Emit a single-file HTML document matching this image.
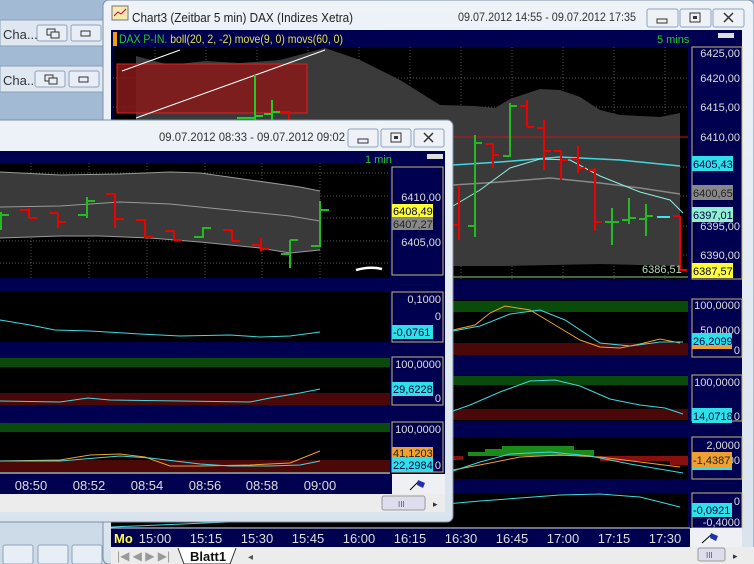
<!DOCTYPE html>
<html><head><meta charset="utf-8"><style>
body{margin:0;width:754px;height:564px;overflow:hidden;background:#a3bad4;font-family:"Liberation Sans",sans-serif}
svg{display:block}
text{font-family:"Liberation Sans",sans-serif}
</style></head><body>
<svg width="754" height="564" viewBox="0 0 754 564">
<defs>
<linearGradient id="tb" x1="0" y1="0" x2="0" y2="1"><stop offset="0" stop-color="#eef3f8"/><stop offset="1" stop-color="#d9e3ee"/></linearGradient>
</defs>
<rect x="0" y="0" width="754" height="564" fill="#a3bad4"/>
<g>
<rect x="0" y="20" width="104" height="26" fill="#dfe7f0" stroke="#8aa0b8"/>
<text x="3" y="39" font-size="13" fill="#333">Cha...</text>
<rect x="37" y="25" width="30" height="16" rx="2" fill="#e8eef5" stroke="#8da2bb"/>
<rect x="47" y="29" width="8" height="6" fill="none" stroke="#333"/><rect x="51" y="32" width="8" height="6" fill="#e8eef5" stroke="#333"/>
<rect x="71" y="25" width="30" height="16" rx="2" fill="#e8eef5" stroke="#8da2bb"/>
<rect x="81" y="31" width="9" height="5" fill="none" stroke="#333"/>
<rect x="0" y="66" width="104" height="26" fill="#dfe7f0" stroke="#8aa0b8"/>
<text x="3" y="85" font-size="13" fill="#333">Cha...</text>
<rect x="35" y="71" width="30" height="16" rx="2" fill="#e8eef5" stroke="#8da2bb"/>
<rect x="45" y="75" width="8" height="6" fill="none" stroke="#333"/><rect x="49" y="78" width="8" height="6" fill="#e8eef5" stroke="#333"/>
<rect x="69" y="71" width="30" height="16" rx="2" fill="#e8eef5" stroke="#8da2bb"/>
<rect x="79" y="77" width="9" height="5" fill="none" stroke="#333"/>
</g>
<rect x="0" y="512" width="104" height="52" fill="#cddbe9"/>
<rect x="3" y="545" width="30" height="19" rx="2" fill="#e8eef5" stroke="#8da2bb"/>
<rect x="38" y="545" width="30" height="19" rx="2" fill="#e8eef5" stroke="#8da2bb"/>
<rect x="72" y="545" width="30" height="19" rx="2" fill="#e8eef5" stroke="#8da2bb"/>

<!-- BACK WINDOW -->
<rect x="103" y="0" width="651" height="564" rx="6" fill="url(#tb)" stroke="#7d8fa5"/>
<rect x="112" y="6" width="16" height="14" fill="#f4e9b0" stroke="#777"/><path d="M114 16l4-4 3 2 5-5" stroke="#c03" fill="none"/>
<text x="132" y="22" font-size="13" fill="#222" textLength="221" lengthAdjust="spacingAndGlyphs">Chart3 (Zeitbar 5 min)  DAX (Indizes Xetra)</text>
<text x="458" y="21" font-size="12" fill="#333" textLength="178" lengthAdjust="spacingAndGlyphs">09.07.2012 14:55 - 09.07.2012 17:35</text>
<rect x="647" y="9" width="31" height="18" rx="2" fill="#eef2f7" stroke="#8da2bb"/><rect x="657" y="19" width="10" height="4" fill="none" stroke="#333"/>
<rect x="680" y="9" width="31" height="18" rx="2" fill="#eef2f7" stroke="#8da2bb"/><rect x="690" y="13" width="10" height="9" fill="none" stroke="#333"/><rect x="693" y="16" width="4" height="3" fill="#333"/>
<rect x="713" y="9" width="31" height="18" rx="2" fill="#eef2f7" stroke="#8da2bb"/><path d="M724 13l9 9M733 13l-9 9" stroke="#333" stroke-width="1.5"/>
<rect x="111" y="30" width="631" height="518" fill="#000050"/>
<rect x="113" y="32" width="4" height="14" fill="#f0a000"/>
<text x="119" y="43" font-size="12" textLength="224" lengthAdjust="spacingAndGlyphs"><tspan fill="#22cc22">DAX P-IN.</tspan><tspan fill="#e0e040"> boll(20, 2, -2) move(9, 0) movs(60, 0)</tspan></text>
<text x="657" y="43" font-size="11" fill="#22cc22">5 mins</text>
<rect x="718" y="33" width="16" height="5" fill="#ddd"/>
<rect x="113" y="47" width="575" height="232" fill="#000"/>
<g stroke="#555" stroke-dasharray="1,2">
<path d="M113 78H688M113 107H688M113 137H688M113 167H688M113 196H688M113 226H688M113 255H688"/>
<path d="M155 47V279M206 47V279M257 47V279M308 47V279M359 47V279M410 47V279M461 47V279M512 47V279M563 47V279M614 47V279M665 47V279"/>
</g>
<path d="M136 56L170 65L205 61L240 63L280 60L310 52L325 48L360 60L400 80L440 105L475 106L495 108L510 99L540 89L560 90L580 97L600 110L620 115L660 117L680 113L680 266L600 264L500 266L453 266L453 279L136 279Z" fill="#3a3a3a"/>
<rect x="117" y="64" width="190" height="49" fill="#8a1a1a" fill-opacity="0.85" stroke="#e02020"/>
<path d="M122 71L180 50M136 118L325 50" stroke="#fff" stroke-width="1"/>
<path d="M255 75V120M272 100V120M237 118H255M255 116H263M264 114H272M272 112H280" stroke="#22cc22" stroke-width="2" fill="none"/>
<path d="M280 112H289V120" stroke="#e00" stroke-width="2" fill="none"/>
<path d="M453 137H688" stroke="#c01818"/>
<path d="M453 185L500 182L550 178L600 183L640 188L680 194" stroke="#888" fill="none" stroke-width="1.5"/>
<path d="M453 165L500 162L560 157L620 160L680 166" stroke="#40d8e0" fill="none" stroke-width="1.5"/>
<path d="M453 206L480 190L510 168L540 159L570 160L600 176L640 192L670 200L683 213" stroke="#90f0e0" fill="none"/>
<path d="M453 277H688" stroke="#8c8" stroke-width="1"/>
<g stroke-width="2" fill="none">
<path d="M459 185V240M453 225H459" stroke="#e00"/>
<path d="M475 135V237M468 226H475M475 143H482" stroke="#22bb22"/>
<path d="M493 143V168M486 144H493M493 155H499" stroke="#e00"/>
<path d="M510 103V157M503 156H510M510 106H517" stroke="#22bb22"/>
<path d="M527 100V127M520 106H527M527 127H534" stroke="#e00"/>
<path d="M544 120V170M537 128H544M544 151H551" stroke="#e00"/>
<path d="M561 150V180M554 151H561M561 160H568" stroke="#e00"/>
<path d="M578 146V173M571 159H578M578 168H585" stroke="#e00"/>
<path d="M595 168V231M588 170H595M595 222H602" stroke="#e00"/>
<path d="M612 208V245M605 222H612M612 222H619" stroke="#22bb22"/>
<path d="M629 198V224M622 220H629M629 218H636" stroke="#22bb22"/>
<path d="M646 204V236M639 219H646M646 216H653" stroke="#22bb22"/>
<path d="M657 217H670" stroke="#40e0f0"/>
<path d="M680 216V270M673 216H680M680 270H687" stroke="#e00"/>
</g>
<text x="642" y="273" font-size="11" fill="#bdb">6386,51</text>
<rect x="692" y="47" width="50" height="232" fill="#000050" stroke="#c8b870"/>
<g font-size="11" fill="#ddd" text-anchor="end">
<text x="740" y="57">6425,00</text><text x="740" y="82">6420,00</text><text x="740" y="111">6415,00</text><text x="740" y="141">6410,00</text>
<text x="740" y="230">6395,00</text><text x="740" y="259">6390,00</text>
</g>
<rect x="692" y="156" width="41" height="15" fill="#30e0e8"/><text x="693" y="168" font-size="11" fill="#004">6405,43</text>
<rect x="692" y="185" width="41" height="15" fill="#888"/><text x="693" y="197" font-size="11" fill="#222">6400,65</text>
<rect x="692" y="207" width="41" height="15" fill="#90f0d0"/><text x="693" y="219" font-size="11" fill="#004">6397,01</text>
<rect x="692" y="263" width="41" height="15" fill="#ffff30"/><text x="693" y="275" font-size="11" fill="#004">6387,57</text>
<rect x="453" y="299" width="235" height="57" fill="#000"/>
<rect x="453" y="301" width="235" height="11" fill="#0a4a0a"/>
<rect x="453" y="343" width="235" height="12" fill="#4a0808"/>
<path d="M453 330L475 325L490 313L505 306L530 310L555 325L580 340L600 347L620 348L640 344L660 339L680 343" stroke="#f0a030" fill="none"/>
<path d="M453 331L480 326L510 314L540 310L565 320L600 343L630 346L660 342L683 342" stroke="#40d8e0" fill="none"/>
<rect x="692" y="299" width="50" height="58" fill="#000050" stroke="#c8b870"/>
<text x="740" y="309" font-size="11" fill="#ddd" text-anchor="end">100,0000</text>
<text x="740" y="334" font-size="11" fill="#ddd" text-anchor="end">50,0000</text>
<rect x="692" y="333" width="40" height="15" fill="#30e0e8"/><text x="693" y="345" font-size="11" fill="#004">26,2099</text>
<rect x="692" y="346" width="40" height="3" fill="#f0a030"/>
<text x="740" y="354" font-size="11" fill="#ddd" text-anchor="end">0</text>
<rect x="453" y="375" width="235" height="46" fill="#000"/>
<rect x="453" y="376" width="235" height="9" fill="#0a4a0a"/>
<rect x="453" y="409" width="235" height="11" fill="#4a0808"/>
<path d="M453 411L470 405L500 392L530 381L555 380L580 386L610 399L640 405L665 408L683 414" stroke="#40d8e0" fill="none"/>
<rect x="692" y="375" width="50" height="46" fill="#000050" stroke="#c8b870"/>
<text x="740" y="386" font-size="11" fill="#ddd" text-anchor="end">100,0000</text>
<rect x="692" y="408" width="40" height="15" fill="#30e0e8"/><text x="693" y="420" font-size="11" fill="#004">14,0718</text>
<text x="740" y="420" font-size="11" fill="#ddd" text-anchor="end">0</text>
<rect x="453" y="437" width="235" height="42" fill="#000"/>
<rect x="453" y="456" width="10" height="4" fill="#8a1010"/>
<rect x="468" y="452" width="36" height="4" fill="#1a8a1a"/><rect x="485" y="449" width="17" height="7" fill="#1a8a1a"/>
<rect x="502" y="446" width="72" height="10" fill="#1a8a1a"/><rect x="574" y="450" width="20" height="6" fill="#1a8a1a"/>
<rect x="600" y="456" width="88" height="5" fill="#8a1010"/><rect x="670" y="456" width="18" height="9" fill="#8a1010"/>
<path d="M453 470L490 463L520 457L560 455L600 457L640 462L680 467" stroke="#f0a030" fill="none"/>
<path d="M453 471L480 462L510 454L550 452L590 456L630 464L683 473" stroke="#40d8e0" fill="none"/>
<rect x="692" y="437" width="50" height="42" fill="#000050" stroke="#c8b870"/>
<text x="740" y="449" font-size="11" fill="#ddd" text-anchor="end">2,0000</text>
<text x="740" y="464" font-size="11" fill="#ddd" text-anchor="end">00</text>
<rect x="692" y="462" width="40" height="8" fill="#30e0e8"/>
<rect x="692" y="452" width="40" height="15" fill="#f0a030"/><text x="693" y="464" font-size="11" fill="#222">-1,4387</text>
<rect x="111" y="493" width="577" height="34" fill="#000"/>
<path d="M111 527L300 519L400 508L480 501L560 495L600 494L640 497L680 507" stroke="#40d8e0" fill="none"/>
<rect x="692" y="493" width="50" height="35" fill="#000050" stroke="#c8b870"/>
<text x="740" y="505" font-size="11" fill="#ddd" text-anchor="end">0</text>
<rect x="692" y="503" width="40" height="14" fill="#30e0e8"/><text x="693" y="514" font-size="11" fill="#004">-0,0921</text>
<text x="740" y="526" font-size="11" fill="#ddd" text-anchor="end">-0,4000</text>
<rect x="111" y="528" width="579" height="19" fill="#000050"/>
<path d="M111 528H690" stroke="#ddd"/>
<g font-size="13" fill="#ddd" text-anchor="middle">
<text x="155" y="543">15:00</text><text x="206" y="543">15:15</text><text x="257" y="543">15:30</text><text x="308" y="543">15:45</text><text x="359" y="543">16:00</text><text x="410" y="543">16:15</text><text x="461" y="543">16:30</text><text x="512" y="543">16:45</text><text x="563" y="543">17:00</text><text x="614" y="543">17:15</text><text x="665" y="543">17:30</text>
</g>
<text x="114" y="543" font-size="13" font-weight="bold" fill="#ffff40">Mo</text>
<rect x="690" y="528" width="52" height="19" fill="#eef0f4"/>
<path d="M702 543L712 534" stroke="#000"/><path d="M711 533l7 3-2 5-6-3z" fill="#2030b0"/>
<rect x="111" y="547" width="643" height="17" fill="#ececec"/>
<text x="117" y="560" font-size="12" fill="#999">|◀ ◀ ▶ ▶|</text>
<path d="M178 548l6 16h46l6-16" fill="#fff" stroke="#333"/>
<text x="190" y="561" font-size="13" font-weight="bold" fill="#111">Blatt1</text>
<text x="248" y="560" font-size="10" fill="#555">◂</text>
<rect x="698" y="548" width="27" height="13" rx="2" fill="#dde" stroke="#999"/><text x="706" y="558" font-size="8" fill="#555">III</text>
<text x="733" y="559" font-size="9" fill="#333">▸</text>

<!-- FRONT WINDOW -->
<rect x="-6" y="120" width="459" height="402" rx="6" fill="url(#tb)" stroke="#7d8fa5"/>
<text x="159" y="141" font-size="12" fill="#333" textLength="186" lengthAdjust="spacingAndGlyphs">09.07.2012 08:33 - 09.07.2012 09:02</text>
<rect x="348" y="129" width="30" height="18" rx="2" fill="#eef2f7" stroke="#8da2bb"/><rect x="358" y="139" width="10" height="4" fill="none" stroke="#333"/>
<rect x="381" y="129" width="30" height="18" rx="2" fill="#eef2f7" stroke="#8da2bb"/><rect x="391" y="133" width="10" height="9" fill="none" stroke="#333"/><rect x="394" y="136" width="4" height="3" fill="#333"/>
<rect x="414" y="129" width="30" height="18" rx="2" fill="#eef2f7" stroke="#8da2bb"/><path d="M424 133l9 9M433 133l-9 9" stroke="#333" stroke-width="1.5"/>
<rect x="0" y="151" width="445" height="343" fill="#000050"/>
<text x="365" y="163" font-size="11" fill="#22cc22">1 min</text>
<rect x="427" y="154" width="16" height="5" fill="#ddd"/>
<rect x="0" y="163" width="390" height="115" fill="#000"/>
<g stroke="#555" stroke-dasharray="1,2">
<path d="M0 173H390M0 196H390M0 218H390M0 241H390M0 263H390"/>
<path d="M31 163V278M89 163V278M147 163V278M205 163V278M262 163V278M320 163V278"/>
</g>
<path d="M0 172L60 175L120 174L170 172L200 173L250 180L300 187L320 191L320 250L290 253L260 248L200 242L150 238L100 236L60 236L0 238Z" fill="#3a3a3a"/>
<path d="M0 207L60 206L120 202L170 204L230 210L290 216L320 221" stroke="#999" fill="none"/>
<path d="M0 238L60 236L100 236L150 238L200 242L260 248L290 253L320 250" stroke="#999" fill="none"/>
<path d="M0 172L60 175L120 174L170 172L200 173L250 180L300 187L320 191" stroke="#999" fill="none"/>
<g stroke-width="2" fill="none">
<path d="M1 212V230M1 215H9" stroke="#22bb22"/>
<path d="M29 208V218M20 210H29M29 218H37" stroke="#e00"/>
<path d="M58 213V228M49 213H58M58 222H66" stroke="#e00"/>
<path d="M87 197V218M78 215H87M87 201H95" stroke="#22bb22"/>
<path d="M115 193V228M106 194H115M115 219H124" stroke="#e00"/>
<path d="M145 219V238M136 220H145M145 237H153" stroke="#e00"/>
<path d="M174 231V240M165 231H174M174 240H182" stroke="#e00"/>
<path d="M203 227V238M194 237H203M203 228H211" stroke="#22bb22"/>
<path d="M232 230V242M223 230H232M232 241H240" stroke="#e00"/>
<path d="M261 238V251M252 245H261M261 249H269" stroke="#e00"/>
<path d="M290 240V268M281 254H290M290 240H298" stroke="#22bb22"/>
<path d="M320 201V247M311 246H320M320 210H329" stroke="#22bb22"/>
</g>
<path d="M356 270Q370 266 382 269" stroke="#fff" stroke-width="2.5" fill="none"/>
<rect x="392" y="167" width="51" height="108" fill="#000050" stroke="#c8b870"/>
<text x="441" y="201" font-size="11" fill="#ddd" text-anchor="end">6410,00</text>
<text x="441" y="246" font-size="11" fill="#ddd" text-anchor="end">6405,00</text>
<rect x="392" y="204" width="41" height="13" fill="#ffff30"/><text x="393" y="215" font-size="11" fill="#004">6408,49</text>
<rect x="392" y="217" width="41" height="13" fill="#888"/><text x="393" y="228" font-size="11" fill="#222">6407,27</text>
<rect x="0" y="292" width="390" height="50" fill="#000"/>
<path d="M0 320L30 325L55 330L90 331L140 334L180 336L230 335L260 337L290 336L320 332" stroke="#40d8e0" fill="none"/>
<rect x="392" y="292" width="51" height="50" fill="#000050" stroke="#c8b870"/>
<text x="441" y="303" font-size="11" fill="#ddd" text-anchor="end">0,1000</text>
<text x="441" y="320" font-size="11" fill="#ddd" text-anchor="end">0</text>
<rect x="392" y="325" width="41" height="14" fill="#30e0e8"/><text x="393" y="336" font-size="11" fill="#004">-0,0761</text>
<rect x="0" y="358" width="390" height="47" fill="#000"/>
<rect x="0" y="358" width="390" height="9" fill="#0a4a0a"/>
<rect x="0" y="393" width="390" height="12" fill="#4a0808"/>
<path d="M0 401L60 402L88 398L110 400L180 401L250 402L270 398L300 393L320 389" stroke="#40d8e0" fill="none"/>
<rect x="392" y="357" width="51" height="48" fill="#000050" stroke="#c8b870"/>
<text x="441" y="368" font-size="11" fill="#ddd" text-anchor="end">100,0000</text>
<rect x="392" y="382" width="41" height="14" fill="#30e0e8"/><text x="393" y="393" font-size="11" fill="#004">29,6228</text>
<text x="441" y="402" font-size="11" fill="#ddd" text-anchor="end">0</text>
<rect x="0" y="423" width="390" height="50" fill="#000"/>
<rect x="0" y="423" width="390" height="9" fill="#0a4a0a"/>
<rect x="0" y="460" width="390" height="12" fill="#4a0808"/>
<path d="M0 461L60 460L90 455L120 454L145 457L170 466L200 466L250 465L290 463L320 451" stroke="#f0a030" fill="none"/>
<path d="M0 461L60 461L120 456L150 458L200 464L230 466L270 466L300 465L320 461" stroke="#40d8e0" fill="none"/>
<rect x="392" y="422" width="51" height="50" fill="#000050" stroke="#c8b870"/>
<text x="441" y="433" font-size="11" fill="#ddd" text-anchor="end">100,0000</text>
<rect x="392" y="447" width="41" height="11" fill="#f0a030"/><text x="393" y="457" font-size="11" fill="#222">41,1203</text>
<rect x="392" y="458" width="41" height="14" fill="#30e0e8"/><text x="393" y="469" font-size="11" fill="#004">22,2984</text>
<text x="441" y="469" font-size="11" fill="#ddd" text-anchor="end">0</text>
<path d="M0 473H390" stroke="#fff"/>
<rect x="0" y="476" width="390" height="17" fill="#000050"/>
<g font-size="13" fill="#ddd" text-anchor="middle">
<text x="31" y="490">08:50</text><text x="89" y="490">08:52</text><text x="147" y="490">08:54</text><text x="205" y="490">08:56</text><text x="262" y="490">08:58</text><text x="320" y="490">09:00</text>
</g>
<rect x="392" y="474" width="53" height="20" fill="#eef0f4"/>
<path d="M410 490L419 481" stroke="#000"/><path d="M418 480l7 3-2 5-6-3z" fill="#2030b0"/>
<rect x="0" y="494" width="445" height="18" fill="#ececec"/>
<rect x="382" y="496" width="43" height="14" rx="2" fill="#dde" stroke="#999"/><text x="398" y="507" font-size="8" fill="#555">III</text>
<text x="433" y="507" font-size="9" fill="#333">▸</text>
</svg>
</body></html>
